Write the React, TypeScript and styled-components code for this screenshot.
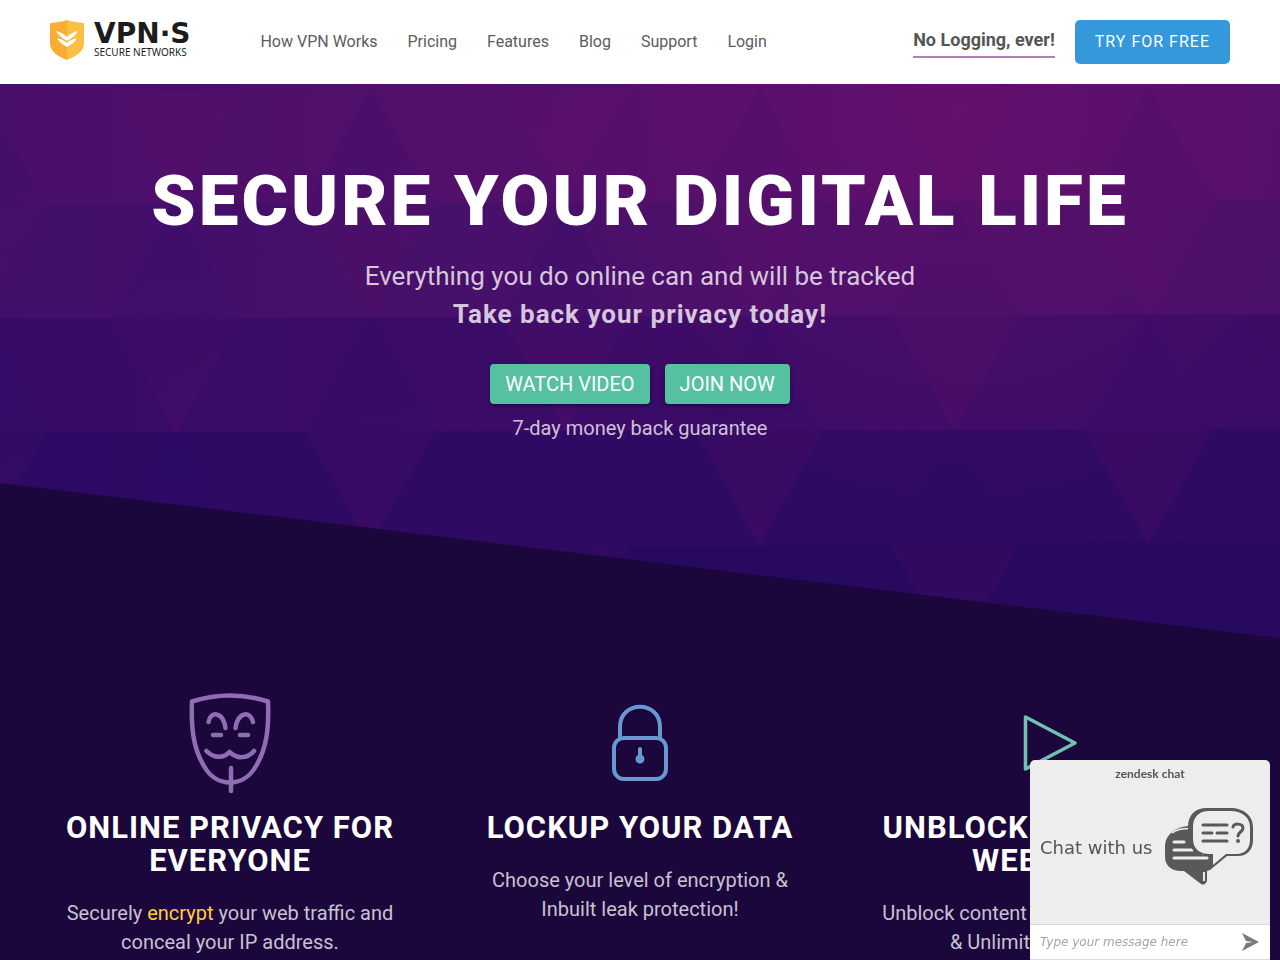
import React from "react";
import styled, { createGlobalStyle } from "styled-components";

const GlobalStyle = createGlobalStyle`
  * { box-sizing: border-box; }
  body {
    margin: 0;
    background: #1b073b;
    font-family: Roboto, "Liberation Sans", sans-serif;
  }
  h1, h2, p { margin: 0; }
  a { text-decoration: none; }
`;

const Header = styled.header`
  display: flex;
  align-items: center;
  height: 84px;
  padding: 0 50px;
  background: #fff;
`;

const Logo = styled.a`
  display: flex;
  align-items: center;
  gap: 10px;
  margin: 0 70px 4px 0;
  color: #1c1c1c;
`;

const LogoText = styled.span`
  display: flex;
  flex-direction: column;
  min-width: 96px;
`;

const LogoName = styled.span`
  font: bold 28px/24px "DejaVu Sans", sans-serif;
`;

const LogoTag = styled.span`
  font: 10px/12px "Noto Sans", sans-serif;
`;

const Nav = styled.nav`
  display: flex;
  gap: 30px;
`;

const NavLink = styled.a`
  color: #5c5c5c;
  font-size: 16px;
  line-height: 20px;
`;

const HeaderActions = styled.div`
  display: flex;
  align-items: center;
  gap: 20px;
  margin-left: auto;
`;

const Promise = styled.a`
  margin-top: 4px;
  padding-bottom: 6px;
  border-bottom: 2px solid #b380bd;
  color: #555;
  font-size: 18px;
  font-weight: 700;
  line-height: 20px;
`;

const TrialButton = styled.button`
  height: 44px;
  padding: 0 20px 2px;
  border: 0;
  border-radius: 5px;
  background: #3498db;
  color: #fff;
  font: 16px Roboto, sans-serif;
  letter-spacing: 1px;
`;

const Hero = styled.section`
  position: relative;
  padding: 78px 20px 196px;
  background: #2d0a62;
  clip-path: polygon(0 0, 100% 0, 100% 100%, 0 calc(100% - 155px));
  text-align: center;
`;

const Backdrop = styled.svg`
  position: absolute;
  inset: 0;
  width: 100%;
  height: 100%;
`;

const HeroContent = styled.div`
  position: relative;
  display: flex;
  flex-direction: column;
  align-items: center;
`;

const Title = styled.h1`
  color: #fff;
  font-size: 71px;
  font-weight: 900;
  line-height: 78px;
  letter-spacing: 3px;
`;

const Lead = styled.p<{ $strong?: boolean }>`
  color: #d5c6dc;
  font-size: 26px;
  font-weight: ${(p) => (p.$strong ? 700 : 400)};
  letter-spacing: ${(p) => (p.$strong ? "1px" : "normal")};
  line-height: 38px;
`;

const LeadGroup = styled.div`
  margin: 17px 0 31px;
`;

const ButtonRow = styled.div`
  display: flex;
  gap: 15px;
`;

const ActionButton = styled.button`
  height: 40px;
  padding: 0 15px;
  border: 0;
  border-radius: 4px;
  background: #56c1a0;
  box-shadow: 0 2px 4px rgba(10, 5, 50, 0.6);
  color: #fff;
  font: 20px Roboto, sans-serif;
`;

const Guarantee = styled.p`
  margin-top: 10px;
  color: #cfc0d9;
  font-size: 20px;
  line-height: 28px;
`;

const Features = styled.section`
  display: grid;
  grid-template-columns: repeat(3, 1fr);
  padding: 55px 25px 0;
`;

const Feature = styled.article`
  display: flex;
  flex-direction: column;
  align-items: center;
  padding: 0 35px;
  text-align: center;
`;

const FeatureIcon = styled.svg`
  width: 100px;
  height: 100px;
  margin-bottom: 18px;
  fill: none;
  stroke-linecap: round;
  stroke-linejoin: round;
`;

const FeatureTitle = styled.h2`
  margin-bottom: 22px;
  color: #fff;
  font-size: 31px;
  font-weight: 700;
  letter-spacing: 1px;
  line-height: 33px;
`;

const FeatureText = styled.p`
  color: #c9c1d2;
  font-size: 20px;
  line-height: 29px;
`;

const Highlight = styled.a`
  color: #ffcf40;
`;

const Chat = styled.aside`
  position: fixed;
  right: 10px;
  bottom: 0;
  width: 240px;
  border-radius: 5px 5px 0 0;
  overflow: hidden;
  background: #ededed;
  color: #555;
`;

const ChatBrand = styled.div`
  font: bold 12px/28px Lato, sans-serif;
  text-align: center;
`;

const ChatBody = styled.div`
  display: flex;
  align-items: center;
  justify-content: space-between;
  height: 136px;
  padding: 0 16px 18px 10px;
  font: 18px "DejaVu Sans", sans-serif;
`;

const ChatForm = styled.form`
  display: flex;
  align-items: center;
  height: 36px;
  padding: 0 10px;
  border-top: 1px solid #d8d8d8;
  border-bottom: 1px solid #d8d8d8;
  background: #fff;
`;

const ChatInput = styled.input`
  flex: 1;
  min-width: 0;
  padding: 0;
  border: 0;
  outline: 0;
  background: none;
  font: italic 12px "DejaVu Sans", sans-serif;
  &::placeholder { color: #a5a5a5; opacity: 1; }
`;

const SendButton = styled.button`
  display: flex;
  padding: 0;
  border: 0;
  background: none;
`;

const SIDE = 129.7;
const ROW = 114.4;
const PERIOD = SIDE * 3;
const ROW_COLORS = ["#54106a", "#53106b", "#48106a", "#3b0c67", "#2e0a63", "#27095f"];

function Triangles() {
  const shapes: React.ReactNode[] = [];
  ROW_COLORS.forEach((color, i) => {
    const top = 6 + (i - 1) * ROW;
    const bottom = top + ROW;
    const first = i % 2 ? 176.5 - PERIOD : -19 - PERIOD;
    shapes.push(
      <rect key={`r${i}`} x="-20" y={top} width="1320" height={ROW + 40} fill={color} />
    );
    for (let n = 0; n < 6; n++) {
      const x = first + n * PERIOD;
      const h = SIDE / 2;
      const d = x + PERIOD / 2;
      shapes.push(
        <polygon key={`v${i}-${n}`} points={`${x - h},${top} ${x + h},${top} ${x},${bottom}`} fill="url(#bright)" />,
        <polygon key={`u${i}-${n}`} points={`${d - h},${bottom} ${d + h},${bottom} ${d},${top}`} fill="url(#dim)" />
      );
    }
  });
  return <g transform="skewY(-0.2)">{shapes}</g>;
}

function HeroBackdrop() {
  return (
    <Backdrop viewBox="0 0 1280 554" preserveAspectRatio="xMidYMid slice" aria-hidden="true">
      <defs>
        <linearGradient id="bright" x1="0" y1="0" x2="0" y2="1">
          <stop offset="0" stopColor="#681068" stopOpacity="0.14" />
          <stop offset="1" stopColor="#681068" stopOpacity="0.2" />
        </linearGradient>
        <linearGradient id="dim" x1="0" y1="0" x2="0" y2="1">
          <stop offset="0" stopColor="#200868" stopOpacity="0.16" />
          <stop offset="1" stopColor="#200868" stopOpacity="0.08" />
        </linearGradient>
        <radialGradient id="glow" gradientUnits="userSpaceOnUse" cx="960" cy="20" r="420">
          <stop offset="0" stopColor="#7c106e" stopOpacity="0.34" />
          <stop offset="1" stopColor="#7c106e" stopOpacity="0" />
        </radialGradient>
        <linearGradient id="shade" x1="0" y1="0" x2="1" y2="0">
          <stop offset="0" stopColor="#24086a" stopOpacity="0.2" />
          <stop offset="0.4" stopColor="#24086a" stopOpacity="0" />
        </linearGradient>
      </defs>
      <Triangles />
      <rect width="1280" height="554" fill="url(#shade)" />
      <rect width="1280" height="554" fill="url(#glow)" />
    </Backdrop>
  );
}

function ShieldMark() {
  return (
    <svg width="34" height="42" viewBox="0 0 34 42" aria-hidden="true">
      <path d="M17 1C12 3 6 3 1 4Q0 4 0 5V24C0 33 8 37 17 41Z" fill="#f9ad35" />
      <path d="M17 1C22 3 28 3 33 4Q34 4 34 5V24C34 33 26 37 17 41Z" fill="#fbc043" />
      <path d="M6 12C11 13 14 15 17 18C20 15 23 13 28 12C26 16 22 19 17 22C12 19 8 16 6 12Z" fill="#fff" />
      <path d="M7 19C12 20 15 22 17 24C19 22 22 20 27 19C25 23 21 26 17 28C13 26 9 23 7 19Z" fill="#fff" />
    </svg>
  );
}

function ChatBubbles() {
  return (
    <svg width="90" height="80" viewBox="0 -1 90 80" aria-hidden="true">
      <path d="M1 37C2 26 12 19 24 18H38V47H49V56Q48 62 43 63V73Q41 78 37 76L20 63H17C7 63 1 57 1 49Z" fill="#595959" />
      <path d="M8 25C13 21 18 20.500 26 20.500" stroke="#ededed" strokeWidth="1.500" fill="none" />
      <path d="M40 64V73" stroke="#ededed" strokeWidth="2" />
      <path d="M10 34H20M10 42H28M10 50H43" stroke="#ededed" strokeWidth="3" strokeLinecap="round" />
      <path d="M43 0H66C80 0 89 8 89 19V32C89 42 83 48 74 48H63L46 62L44 61L48 55V47H40C30 45 24 39 24 30V19C24 7 31 0 43 0Z" fill="#595959" />
      <path d="M45 3H66C79 3 86 10 86 19V32C86 41 80 46 73 46H62L49 57V46H46C35 46 29 40 29 31V19C29 9 35 3 45 3Z" fill="#ededed" />
      <path d="M39 17H63M39 25H48M53 25H63M39 33H63" stroke="#595959" strokeWidth="3" strokeLinecap="round" />
      <path d="M69 19C69 15 79 15 79 20C79 24 74 24 74 28" stroke="#595959" strokeWidth="3" fill="none" strokeLinecap="round" />
      <circle cx="74" cy="33" r="2" fill="#595959" />
    </svg>
  );
}

const links = ["How VPN Works", "Pricing", "Features", "Blog", "Support", "Login"];

export default function App() {
  return (
    <>
      <GlobalStyle />
      <Header>
        <Logo href="#">
          <ShieldMark />
          <LogoText>
            <LogoName>VPN·S</LogoName>
            <LogoTag>SECURE NETWORKS</LogoTag>
          </LogoText>
        </Logo>
        <Nav>
          {links.map((label) => (
            <NavLink key={label} href="#">{label}</NavLink>
          ))}
        </Nav>
        <HeaderActions>
          <Promise href="#">No Logging, ever!</Promise>
          <TrialButton>TRY FOR FREE</TrialButton>
        </HeaderActions>
      </Header>
      <main>
        <Hero>
          <HeroBackdrop />
          <HeroContent>
            <Title>SECURE YOUR DIGITAL LIFE</Title>
            <LeadGroup>
              <Lead>Everything you do online can and will be tracked</Lead>
              <Lead $strong>Take back your privacy today!</Lead>
            </LeadGroup>
            <ButtonRow>
              <ActionButton>WATCH VIDEO</ActionButton>
              <ActionButton>JOIN NOW</ActionButton>
            </ButtonRow>
            <Guarantee>7-day money back guarantee</Guarantee>
          </HeroContent>
        </Hero>
        <Features>
          <Feature>
            <FeatureIcon viewBox="0 0 100 100" stroke="#8f6db3" strokeWidth="4.500" aria-hidden="true">
              <path d="M12 8.500Q50-3.500 88 8.500C89 34 87 55 76 73C64 95 36 95 24 73C13 55 11 34 12 8.500Z" />
              <path d="M28.500 29C30 18 43 18 45.500 35M55.500 35C58 18 71 18 73 29" />
              <path d="M33 42H41M60 42H68M26.500 58C33 65 43 66 49.500 59C57 66 67 66 74 58M51 75V98" />
            </FeatureIcon>
            <FeatureTitle>ONLINE PRIVACY FOR EVERYONE</FeatureTitle>
            <FeatureText>
              Securely <Highlight href="#">encrypt</Highlight> your web traffic and conceal your IP address.
            </FeatureText>
          </Feature>
          <Feature>
            <FeatureIcon viewBox="0 0 100 100" stroke="#6798d0" strokeWidth="4" aria-hidden="true">
              <path d="M30 45V34C30 7 70 7 70 34V45" />
              <rect x="24" y="45" width="52" height="41" rx="10" />
              <path d="M50 56V65" />
              <circle cx="50" cy="66" r="2.500" fill="#6798d0" />
            </FeatureIcon>
            <FeatureTitle>LOCKUP YOUR DATA</FeatureTitle>
            <FeatureText>Choose your level of encryption &amp; Inbuilt leak protection!</FeatureText>
          </Feature>
          <Feature>
            <FeatureIcon viewBox="0 0 100 100" stroke="#70c1b3" strokeWidth="3.500" aria-hidden="true">
              <path d="M25.500 24L75 50L25.500 76Z" />
            </FeatureIcon>
            <FeatureTitle>UNBLOCK THE ENTIRE WEBSITES</FeatureTitle>
            <FeatureText>Unblock content using our Smart DNS &amp; Unlimited bandwidth</FeatureText>
          </Feature>
        </Features>
      </main>
      <Chat>
        <ChatBrand>zendesk chat</ChatBrand>
        <ChatBody>
          <span>Chat with us</span>
          <ChatBubbles />
        </ChatBody>
        <ChatForm>
          <ChatInput aria-label="Message" placeholder="Type your message here" />
          <SendButton type="button" aria-label="Send">
            <svg width="20" height="20" viewBox="0 0 20 20" aria-hidden="true">
              <path d="M2 1L19 10L2 19L6 11L13 10L6 9Z" fill="#7a7a7a" />
            </svg>
          </SendButton>
        </ChatForm>
      </Chat>
    </>
  );
}
